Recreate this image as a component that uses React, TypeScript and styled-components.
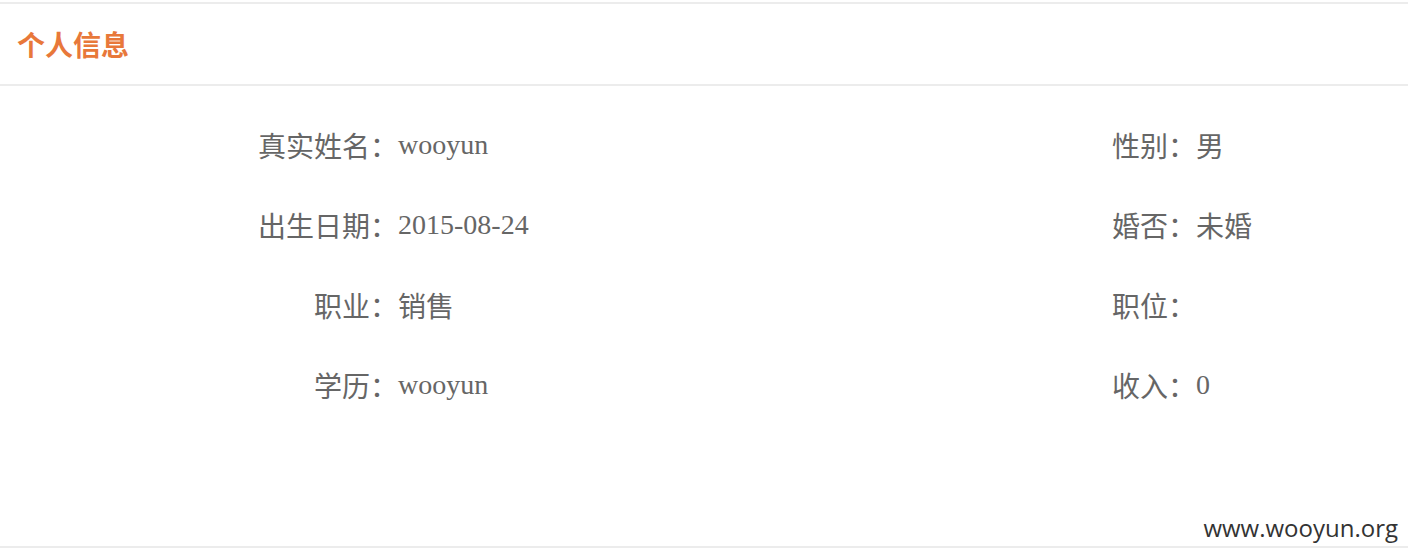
import React from "react";
import styled, { createGlobalStyle } from "styled-components";

const Global = createGlobalStyle`
  html, body { margin: 0; padding: 0; background: #ffffff; }
  body { font-family: "Liberation Serif", "Noto Sans CJK SC", serif; }
`;

const Panel = styled.section`
  margin-top: 2px;
  border-top: 2px solid #ececec;
  border-bottom: 2px solid #ececec;
  height: 546px;
  box-sizing: border-box;
  display: flex;
  flex-direction: column;
`;

const Header = styled.header`
  height: 80px;
  border-bottom: 2px solid #ececec;
  display: flex;
  align-items: center;
  padding-left: 17px;
`;

const Title = styled.h2`
  margin: 0;
  font-family: "Noto Sans CJK SC", serif;
  font-size: 28px;
  font-weight: 700;
  color: #e8783a;
`;

const InfoGrid = styled.div`
  display: grid;
  grid-template-columns: 140px 658px 140px 1fr;
  grid-auto-rows: 80px;
  padding: 19px 0 0 258px;
  color: #666666;
  font-size: 28px;
  font-family: "Liberation Serif", "Noto Sans CJK SC", serif;
`;

const Label = styled.div`
  display: flex;
  align-items: center;
  justify-content: flex-end;
  white-space: nowrap;
`;

const Value = styled.div`
  display: flex;
  align-items: center;
  white-space: nowrap;
`;

const Footer = styled.footer`
  margin-top: auto;
  display: flex;
  justify-content: flex-end;
  padding: 0 10px 3px 0;
`;

const Mark = styled.span`
  font-family: "Open Sans", "Noto Sans", sans-serif;
  font-size: 24px;
  line-height: 30px;
  color: #333333;
`;

const rows: [string, string, string, string][] = [
  ["真实姓名：", "wooyun", "性别：", "男"],
  ["出生日期：", "2015-08-24", "婚否：", "未婚"],
  ["职业：", "销售", "职位：", ""],
  ["学历：", "wooyun", "收入：", "0"],
];

export default function App() {
  return (
    <>
      <Global />
      <Panel>
        <Header>
          <Title>个人信息</Title>
        </Header>
        <InfoGrid>
          {rows.map((r, i) => (
            <React.Fragment key={i}>
              <Label>{r[0]}</Label>
              <Value>{r[1]}</Value>
              <Label>{r[2]}</Label>
              <Value>{r[3]}</Value>
            </React.Fragment>
          ))}
        </InfoGrid>
        <Footer>
          <Mark>www.wooyun.org</Mark>
        </Footer>
      </Panel>
    </>
  );
}
